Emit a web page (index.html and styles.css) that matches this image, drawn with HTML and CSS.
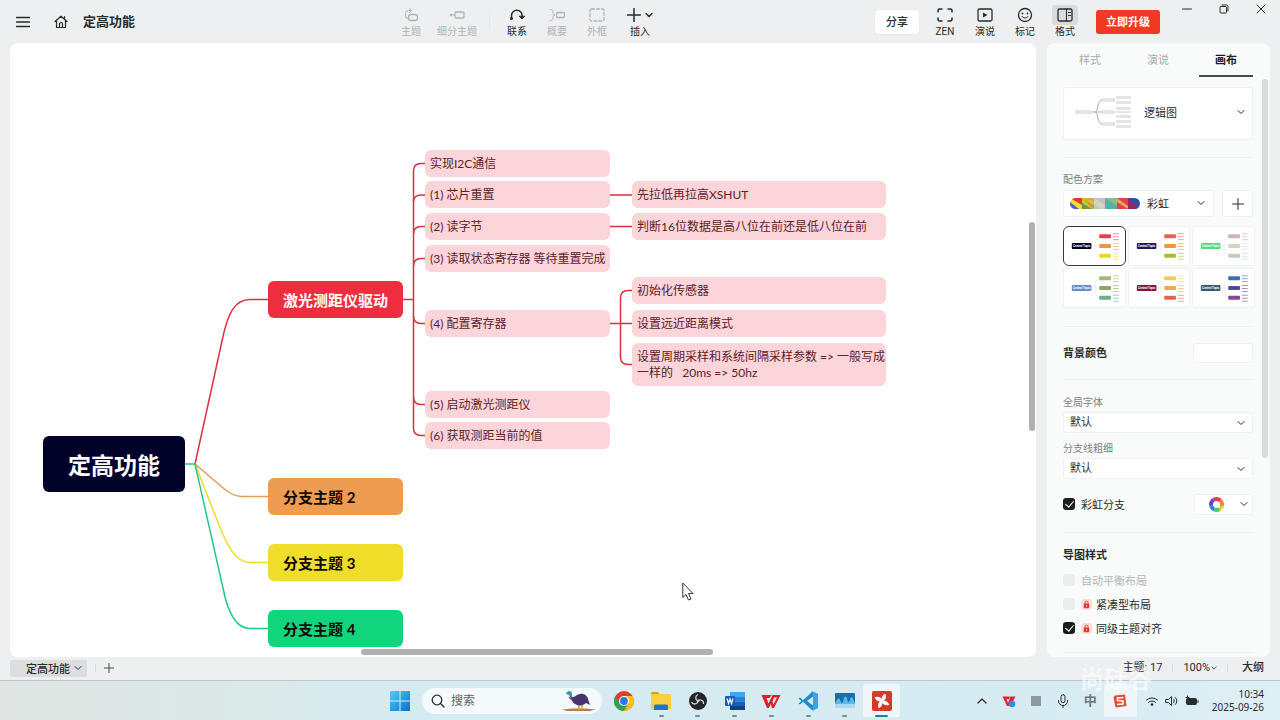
FILE: index.html
```html
<!DOCTYPE html>
<html lang="zh-CN">
<head>
    <meta charset="UTF-8">
    <meta name="viewport" content="width=device-width, initial-scale=1.0">
    <title>定高功能</title>
    <link rel="stylesheet" href="styles.css">
</head>
<body>

    <!-- shared shapes -->
    <svg class="defs" width="0" height="0">
        <symbol id="chevron" viewBox="0 0 8 8"><path d="M1 2.500 4 5.500 7 2.500"/></symbol>
        <symbol id="plus" viewBox="0 0 12 12"><path d="M6 0.500V11.500M0.500 6H11.500"/></symbol>
        <symbol id="lock" viewBox="0 0 12 12">
            <rect width="12" height="12" rx="3" fill="#fde0dd"/>
            <path d="M4.300 5.500V4a1.700 1.700 0 0 1 3.400 0V5.500" fill="none" stroke="#e5352b"/>
            <rect x="3" y="5" width="6" height="5" rx="1" fill="#e5352b"/>
            <path d="M6 6.500V8.500" stroke="#fff" stroke-width="0.800"/>
        </symbol>
        <symbol id="thumb" viewBox="0 0 62 38">
            <path d="M28 19H31M36 9.500C31 9.500 33 19 31 19H36M31 19C33 19 31 28.500 36 28.500" fill="none" stroke="#c9cdd4" stroke-width="0.500" stroke-dasharray="1 1"/>
            <rect class="c0" x="8" y="16" width="20" height="6" rx="1"/>
            <text x="18" y="20" text-anchor="middle">Central Topic</text>
            <rect class="c1" x="36" y="7" width="12" height="4" rx="1"/>
            <rect class="c2" x="36" y="17" width="12" height="4" rx="1"/>
            <rect class="c3" x="36" y="27" width="12" height="4" rx="1"/>
            <path class="l1" d="M50 6.500H56M50 9.500H56M50 12.500H56"/>
            <path class="l2" d="M50 16.500H56M50 19.500H56M50 22.500H56"/>
            <path class="l3" d="M50 26.500H56M50 29.500H56M50 32.500H56"/>
        </symbol>
    </svg>

    <header class="topbar">
        <div class="topbar-left">
            <button class="icon-btn" aria-label="菜单">
                <svg class="line" width="14" height="12" viewBox="0 0 14 12"><path d="M0.500 1.500H13.500M0.500 6H13.500M0.500 10.500H13.500" stroke-width="1.300"/></svg>
            </button>
            <button class="icon-btn" aria-label="主页">
                <svg class="line" width="14" height="14" viewBox="0 0 14 14"><path d="M1 6.500 7 1.200 13 6.500M2.500 5.500V12.500H11.500V5.500M5.500 12.500V9a1.500 1.500 0 0 1 3 0V12.500M10.500 1.500V4" stroke-width="1.200"/></svg>
            </button>
            <h1 class="doc-title">定高功能</h1>
        </div>

        <div class="tools">
            <button class="tool" disabled>
                <svg class="line" width="16" height="16" viewBox="0 0 16 16"><path d="M8 3.500H5.500a3 3 0 0 0-3 3V9a2.500 2.500 0 0 0 2.500 2.500M6.500 1.500 8.800 3.500 6.500 5.500"/><rect x="5.500" y="7.500" width="9" height="6" rx="2.500" stroke-width="1.300"/></svg>
                <span>主题</span>
            </button>
            <button class="tool wide" disabled>
                <svg class="line" width="16" height="16" viewBox="0 0 16 16"><rect x="6" y="5" width="9" height="6" rx="1" stroke-width="1.300"/><path d="M3.500 8H6"/><circle cx="2" cy="8" r="1.200" fill="currentColor" stroke="none"/></svg>
                <span>细分主题</span>
            </button>
            <span class="tool-sep"></span>
            <button class="tool">
                <svg class="line" width="16" height="16" viewBox="0 0 16 16"><path d="M2.500 11.500V8.500a5.300 5.300 0 0 1 10.600 0V11" stroke-width="1.500"/><path d="M10.500 9.500 13 12 15.500 9.500Z" fill="currentColor"/><circle cx="2.500" cy="11.500" r="1.500" fill="currentColor" stroke="none"/></svg>
                <span>联系</span>
            </button>
            <button class="tool" disabled>
                <svg class="line" width="16" height="16" viewBox="0 0 16 16"><path d="M1 2.500C4 2.500 4 3.500 4 5.500 4 7 4.500 8 6 8 4.500 8 4 9 4 10.500 4 12.500 4 13.500 1 13.500"/><rect x="7.500" y="5.500" width="8" height="5" rx="1" stroke-width="1.300"/></svg>
                <span>概要</span>
            </button>
            <button class="tool" disabled>
                <svg class="line" width="16" height="16" viewBox="0 0 16 16"><rect x="1" y="2" width="14" height="12" rx="1.500" stroke-width="1.300" stroke-dasharray="3 2"/></svg>
                <span>外框</span>
            </button>
            <button class="tool insert">
                <span class="insert-icons">
                    <svg class="line" width="14" height="14" viewBox="0 0 14 14"><path d="M7 0.500V13.500M0.500 7H13.500" stroke-width="1.500"/></svg>
                    <svg class="line bold" width="8" height="8"><use href="#chevron"/></svg>
                </span>
                <span>插入</span>
            </button>
        </div>

        <div class="topbar-right">
            <button class="share">分享</button>
            <div class="view-tools">
                <button class="tool">
                    <svg class="line" width="16" height="16" viewBox="0 0 16 16"><path d="M1 5V3.500A1.500 1.500 0 0 1 2.500 2H5M11 2H13.500A1.500 1.500 0 0 1 15 3.500V5M15 11V12.500A1.500 1.500 0 0 1 13.500 14H11M5 14H2.500A1.500 1.500 0 0 1 1 12.500V11" stroke-width="1.500"/></svg>
                    <span>ZEN</span>
                </button>
                <button class="tool">
                    <svg class="line" width="16" height="16" viewBox="0 0 16 16"><rect x="1" y="2" width="14" height="12" rx="1.500" stroke-width="1.300"/><path d="M6 5.500V10.500L10.500 8Z" fill="currentColor" stroke="none"/></svg>
                    <span>演说</span>
                </button>
                <button class="tool">
                    <svg class="line" width="16" height="16" viewBox="0 0 16 16"><circle cx="8" cy="8" r="6.500" stroke-width="1.300"/><path d="M5 9.500C6 11.500 10 11.500 11 9.500"/><circle cx="5.500" cy="6.500" r="0.900" fill="currentColor" stroke="none"/><circle cx="10.500" cy="6.500" r="0.900" fill="currentColor" stroke="none"/></svg>
                    <span>标记</span>
                </button>
                <button class="tool active">
                    <svg class="line" width="16" height="16" viewBox="0 0 16 16"><rect x="1" y="2" width="14" height="12" rx="1.500" stroke-width="1.300"/><path d="M9.500 2V14M11.500 5.500H13.500M11.500 8.500H13.500"/></svg>
                    <span>格式</span>
                </button>
            </div>
            <button class="upgrade">立即升级</button>
            <div class="window-controls">
                <button aria-label="最小化"><svg class="line" width="10" height="10" viewBox="0 0 10 10"><path d="M0.500 5H9.500"/></svg></button>
                <button aria-label="还原"><svg class="line" width="10" height="10" viewBox="0 0 10 10"><rect x="1" y="2.500" width="6.500" height="6.500" rx="1"/><path d="M3 1H7.500A1.500 1.500 0 0 1 9 2.500V7"/></svg></button>
                <button aria-label="关闭"><svg class="line" width="10" height="10" viewBox="0 0 10 10"><path d="M1 1 9 9M9 1 1 9"/></svg></button>
            </div>
        </div>
    </header>

    <main class="workspace">
        <section class="canvas">
            <svg class="links" width="1026" height="614" viewBox="10 43 1026 614">
                <path class="red" d="M195 464 222 341C228 312 235 299.500 250 299.500H268"/>
                <path class="orange" d="M195 464 222 487C230 494 235 496.500 242 496.500H268"/>
                <path class="yellow" d="M195 464 221 530C229 549 237 562.500 250 562.500H268"/>
                <path class="green" d="M185 464H195L223 588C228 614 236 628.500 250 628.500H268"/>

                <!-- level 2 -->
                <path class="red" d="M403 299.500H413.500M425 163.500H421Q413.500 163.500 413.500 171V428Q413.500 435.500 421 435.500H425"/>
                <path class="red" d="M425 195H421Q413.500 195 413.500 202M425 226.500H421Q413.500 226.500 413.500 234M425 258.500H421Q413.500 258.500 413.500 266M425 323.500H421Q413.500 323.500 413.500 316M425 404.500H421Q413.500 404.500 413.500 397"/>

                <!-- level 3 -->
                <path class="red" d="M610 195H632M610 226.500H632M610 323.500H632M632 290.500H628Q620.500 290.500 620.500 298V357Q620.500 364.500 628 364.500H632"/>
            </svg>

            <div class="node root">定高功能</div>
            <div class="node branch branch-1">激光测距仪驱动</div>
            <div class="node branch branch-2">分支主题 2</div>
            <div class="node branch branch-3">分支主题 3</div>
            <div class="node branch branch-4">分支主题 4</div>

            <div class="node sub sub-1">实现I2C通信</div>
            <div class="node sub sub-2">(1) 芯片重置</div>
            <div class="node sub sub-3">(2) 读字节</div>
            <div class="node sub sub-4">(3) 读取状态寄存器 等待重置完成</div>
            <div class="node sub sub-5">(4) 配置寄存器</div>
            <div class="node sub sub-6">(5) 启动激光测距仪</div>
            <div class="node sub sub-7">(6) 获取测距当前的值</div>

            <div class="node leaf leaf-1">先拉低再拉高XSHUT</div>
            <div class="node leaf leaf-2">判断16位数据是高八位在前还是低八位在前</div>
            <div class="node leaf leaf-3">初始化传感器</div>
            <div class="node leaf leaf-4">设置远近距离模式</div>
            <div class="node leaf leaf-5">设置周期采样和系统间隔采样参数 =&gt; 一般写成<br>一样的 &nbsp; 20ms =&gt; 50hz</div>

            <span class="scroll-y"></span>
            <span class="scroll-x"></span>
            <svg class="cursor" width="12" height="19" viewBox="0 0 12 19"><path d="M0.800 1V15.500L4 12.500 6.500 18 9 17 6.500 11.500H11Z" fill="#fff" stroke="#333"/></svg>
        </section>

        <aside class="panel">
            <nav class="tabs">
                <button class="tab">样式</button>
                <button class="tab">演说</button>
                <button class="tab selected">画布</button>
            </nav>

            <div class="panel-body">
                <button class="structure">
                    <svg width="58" height="34" viewBox="0 0 58 34">
                        <path d="M14 17H28M20 17C24 17 21 5 28 5H40M20 17C24 17 21 29 28 29H40M28 17H40" fill="none" stroke="#aaa"/>
                        <g fill="#e4e4e4"><rect y="15" width="18" height="4" rx="2"/><rect x="27" y="3" width="12" height="4"/><rect x="27" y="15" width="12" height="4"/><rect x="27" y="27" width="12" height="4"/>
                        <rect x="41" y="1" width="15" height="3"/><rect x="41" y="6" width="15" height="3"/><rect x="41" y="12" width="15" height="3"/><rect x="41" y="16" width="15" height="2"/><rect x="41" y="20" width="15" height="3"/><rect x="41" y="25" width="15" height="3"/><rect x="41" y="30" width="15" height="3"/></g>
                    </svg>
                    <span>逻辑图</span>
                    <svg class="line" width="8" height="8"><use href="#chevron"/></svg>
                </button>

                <section class="group colors">
                    <h3 class="label">配色方案</h3>
                    <div class="scheme-row">
                        <button class="scheme">
                            <svg width="70" height="11" viewBox="0 0 70 11">
                                <clipPath id="pill"><rect width="70" height="11" rx="5.500"/></clipPath>
                                <g clip-path="url(#pill)">
                                    <rect width="12" height="11" fill="#f5df25"/><path d="M0 0H12V7Z" fill="#e8333d"/><path d="M0 4 9 11H0Z" fill="#4661d8"/>
                                    <rect x="12" width="12" height="11" fill="#b9cf2d"/><path d="M12 0H24V3Z" fill="#ee9b4b"/><path d="M12 5 22 11H12Z" fill="#7d8d4b"/><path d="M12 0 24 8V11Z" fill="#ef7d35"/>
                                    <rect x="24" width="11" height="11" fill="#d3d5c2"/><path d="M24 0H35V7Z" fill="#c9bfcb"/><path d="M24 6 32 11H24Z" fill="#a9d6ae"/>
                                    <rect x="35" width="12" height="11" fill="#53b3a0"/><path d="M35 0H47V8Z" fill="#8ab983"/>
                                    <rect x="47" width="11" height="11" fill="#e0414a"/><path d="M47 0 58 8V11L47 4Z" fill="#f5a05b"/>
                                    <rect x="58" width="12" height="11" fill="#2f4f9e"/><path d="M58 0 70 11H58Z" fill="#8d2a68"/>
                                </g>
                            </svg>
                            <span>彩虹</span>
                            <svg class="line" width="8" height="8"><use href="#chevron"/></svg>
                        </button>
                        <button class="scheme-add" aria-label="添加配色"><svg class="line" width="12" height="12"><use href="#plus"/></svg></button>
                    </div>
                    <div class="thumbs">
                        <button class="thumb theme-1 selected" aria-label="配色 1"><svg><use href="#thumb"/></svg></button>
                        <button class="thumb theme-2" aria-label="配色 2"><svg><use href="#thumb"/></svg></button>
                        <button class="thumb theme-3" aria-label="配色 3"><svg><use href="#thumb"/></svg></button>
                        <button class="thumb theme-4" aria-label="配色 4"><svg><use href="#thumb"/></svg></button>
                        <button class="thumb theme-5" aria-label="配色 5"><svg><use href="#thumb"/></svg></button>
                        <button class="thumb theme-6" aria-label="配色 6"><svg><use href="#thumb"/></svg></button>
                    </div>
                </section>

                <section class="group background">
                    <h3>背景颜色</h3>
                    <button class="swatch" aria-label="背景颜色"></button>
                </section>

                <section class="group">
                    <label class="label" for="font">全局字体</label>
                    <div class="select-box">
                        <select id="font"><option>默认</option></select>
                        <svg class="line" width="8" height="8"><use href="#chevron"/></svg>
                    </div>
                    <label class="label" for="weight">分支线粗细</label>
                    <div class="select-box">
                        <select id="weight"><option>默认</option></select>
                        <svg class="line" width="8" height="8"><use href="#chevron"/></svg>
                    </div>
                    <div class="rainbow-row">
                        <label class="check"><input type="checkbox" checked><span>彩虹分支</span></label>
                        <button class="wheel" aria-label="彩虹颜色">
                            <span class="wheel-icon"></span>
                            <svg class="line" width="8" height="8"><use href="#chevron"/></svg>
                        </button>
                    </div>
                </section>

                <section class="group map-style">
                    <h3>导图样式</h3>
                    <label class="check off"><input type="checkbox" disabled><span>自动平衡布局</span></label>
                    <label class="check"><input type="checkbox"><svg width="11" height="11"><use href="#lock"/></svg><span>紧凑型布局</span></label>
                    <label class="check"><input type="checkbox" checked><svg width="11" height="11"><use href="#lock"/></svg><span>同级主题对齐</span></label>
                </section>
            </div>
            <span class="panel-scroll"></span>
        </aside>
    </main>

    <footer class="statusbar">
        <button class="sheet">定高功能 <svg class="line" width="8" height="8"><use href="#chevron"/></svg></button>
        <span class="bar"></span>
        <button class="sheet-add" aria-label="添加画布"><svg class="line" width="10" height="10"><use href="#plus"/></svg></button>
        <div class="status-right">
            <span>主题: 17</span>
            <span class="bar"></span>
            <button class="zoom">100%<svg class="line" width="6" height="6"><use href="#chevron"/></svg></button>
            <span class="bar"></span>
            <button class="outline">大纲</button>
        </div>
    </footer>

    <div class="taskbar">
        <div class="task-center">
            <button class="start" aria-label="开始">
                <svg width="20" height="20" viewBox="0 0 20 20">
                    <linearGradient id="win" x1="0" y1="0" x2="1" y2="1"><stop offset="0" stop-color="#54cdf4"/><stop offset="1" stop-color="#0670cc"/></linearGradient>
                    <path d="M0.500 0H9.500V9.500H0V0.500ZM10.500 0H20V9.500H10.500ZM0 10.500H9.500V20H0ZM10.500 10.500H20V20H10.500Z" fill="url(#win)"/>
                </svg>
            </button>
            <label class="search">
                <svg class="line" width="14" height="14" viewBox="0 0 14 14"><circle cx="6" cy="6" r="4.800" stroke-width="1.300"/><path d="M9.500 9.500 13 13" stroke-width="1.300"/></svg>
                <input type="text" placeholder="搜索" aria-label="搜索">
                <svg width="34" height="22" viewBox="0 0 34 22">
                    <path d="M0 19.500C8 18 24 18 34 19.500L28 21H5Z" fill="#b77b4e"/>
                    <path d="M17 14V19.500M20 14V19.500" stroke="#e2a93a" stroke-width="1.800"/>
                    <path d="M9 5C11 9 13 6 16 4.500 21 2.500 25 5 26 9L28 15 24 13C20 17 13 16 10 11L7 4Z" fill="#4a3470"/>
                    <path d="M5 2C7 0 10 1 10 4L10 8 7 5 4 4Z" fill="#2e9fa8"/>
                    <path d="M7 7 10 10" stroke="#c23c54" stroke-width="1.500"/>
                </svg>
            </label>
            <div class="apps">
                <button class="app" aria-label="Chrome">
                    <svg width="20" height="20" viewBox="0 0 20 20"><circle cx="10" cy="10" r="10" fill="#e33b2e"/><path d="M1.340 5A10 10 0 0 0 10 20L14.300 12.500H5.700Z" fill="#2da34f"/><path d="M10 20A10 10 0 0 0 18.660 5H10L14.330 12.500Z" fill="#fbc116"/><circle cx="10" cy="10" r="5" fill="#fff"/><circle cx="10" cy="10" r="3.900" fill="#2c79e6"/></svg>
                </button>
                <button class="app open" aria-label="文件资源管理器">
                    <svg width="20" height="20" viewBox="0 0 20 20"><path d="M0 2.500Q0 1 1.500 1H7L9 3.500H0Z" fill="#d99d15"/><path d="M0 5V3H18.500Q20 3 20 4.500V18.500H0Z" fill="#fbcf3f"/><path d="M3 19V15Q3 13.500 4.500 13.500H15.500Q17 13.500 17 15V19Z" fill="#1777c8"/></svg>
                </button>
                <button class="app open" aria-label="OBS">
                    <svg width="20" height="20" viewBox="0 0 20 20"><circle cx="10" cy="10" r="9" fill="#22242a"/><g fill="none" stroke="#d5d5d8" stroke-width="1.300"><path d="M10 10C7 9 7 4.500 10 3.500M10 10C12 7.500 16 9.500 15.500 13M10 10C9.500 13.500 5 14 3.500 11"/></g><circle cx="10" cy="10" r="1.300" fill="#d5d5d8"/></svg>
                </button>
                <button class="app open" aria-label="Word">
                    <svg width="20" height="20" viewBox="0 0 20 20"><rect x="5" y="1" width="15" height="5" fill="#41a5ee"/><rect x="5" y="6" width="15" height="4.500" fill="#2b7cd3"/><rect x="5" y="10.500" width="15" height="4.500" fill="#185abd"/><rect x="5" y="15" width="15" height="4" fill="#103f91"/><rect y="5" width="10" height="10" rx="1" fill="#1b5abe"/><path d="M2 7.500 3.500 12.500 5 8 6.500 12.500 8 7.500" fill="none" stroke="#fff" stroke-width="1.200"/></svg>
                </button>
                <button class="app open" aria-label="WPS">
                    <svg width="20" height="20" viewBox="0 0 20 20"><path d="M0.500 4H10.500L8.500 7H5.500L7.500 12.500 11.500 4H19.500L13 17H11L9.800 13 8 17H6Z" fill="#df1f2c"/><path d="M13 6.500H16L12.500 13.500 11.500 10.500Z" fill="#fff" opacity=".85"/></svg>
                </button>
                <button class="app open" aria-label="VS Code">
                    <svg width="20" height="20" viewBox="0 0 20 20"><path d="M14.500 0.500 20 3V17L14.500 19.500 5 10.800 2 13.500 0.500 12.500 3.500 10 0.500 7.500 2 6.500 5 9.200ZM15 5.500 9 10 15 14.500Z" fill="#1f8ad2" fill-rule="evenodd"/><path d="M14.500 0.500 20 3V17L14.500 19.500 15 14.500V5.500Z" fill="#35a5ec"/></svg>
                </button>
                <button class="app open" aria-label="监视器">
                    <svg width="20" height="20" viewBox="0 0 20 20"><rect y="2" width="20" height="15" rx="1" fill="#176fb0"/><path d="M0 12 3 7.500C5 6 5.500 12 7 12 8.500 12 8.500 5.500 10.500 5.500 12.500 5.500 12 11 13.500 11 15 11 15 6 17 6L20 12V17H0Z" fill="#5bb9ec"/><path d="M0 13H20V17H0Z" fill="#a8dcf5"/></svg>
                </button>
                <button class="app open current" aria-label="Xmind">
                    <svg width="20" height="20" viewBox="0 0 20 20"><rect width="20" height="20" rx="2" fill="#d63a25"/><path d="M10 10C5 10 4 8 3.500 6.500 7 6 9 7 10 10 10 5 12 4 13 3.500 14 7 13 9 10 10 15 10 16 12 16.500 13.500 13 14 11 13 10 10 10 15 8 16 7 16.500 6 13 7 11 10 10Z" fill="#fff" stroke="#fff" stroke-width="1.200"/></svg>
                </button>
            </div>
        </div>

        <div class="tray">
            <button aria-label="显示隐藏的图标"><svg class="line" width="10" height="10" viewBox="0 0 10 10"><path d="M1 7 5 3 9 7" stroke-width="1.300"/></svg></button>
            <button aria-label="WPS 云"><svg width="14" height="14" viewBox="0 0 14 14"><path d="M0.500 2.500H8L7 5H4.500L6 9 8.500 2.500H13.500L11 7 6.500 12H5Z" fill="#dd2631"/><circle cx="10" cy="10" r="3.300" fill="#2d8ce8"/></svg></button>
            <button aria-label="后台应用"><svg width="10" height="10"><rect width="10" height="10" fill="#8e9a9f"/></svg></button>
            <button aria-label="麦克风"><svg class="line" width="12" height="14" viewBox="0 0 12 14"><rect x="4" y="0.700" width="4" height="8" rx="2"/><path d="M1.500 6.500V7A4.500 4.500 0 0 0 10.500 7V6.500M6 11.500V13.500"/></svg></button>
            <button class="ime">中</button>
            <button class="sogou" aria-label="搜狗输入法"><svg width="14" height="14" viewBox="0 0 14 14"><path d="M2 1.500 12 0.500 13.500 12 2.500 13.500 0.500 3Z" fill="#e24b34"/><path d="M10.500 3.500 4.500 4 4.500 6.500 10 7 10 10 4 10.500" fill="none" stroke="#fff" stroke-width="1.500"/></svg></button>
            <div class="system">
                <svg class="line" width="14" height="12" viewBox="0 0 14 12"><path d="M1.500 5A8 8 0 0 1 12.500 5M3.500 7.300A5 5 0 0 1 10.500 7.300"/><circle cx="7" cy="9.500" r="1.300" fill="currentColor" stroke="none"/></svg>
                <svg class="line" width="14" height="12" viewBox="0 0 14 12"><path d="M1 4.500H3.500L6.500 1.500V10.500L3.500 7.500H1ZM8.500 4C9.500 5 9.500 7 8.500 8M10.300 2.500C12.300 4.500 12.300 7.500 10.300 9.500"/></svg>
                <svg class="line" width="14" height="12" viewBox="0 0 14 12"><rect x="1.500" y="3.500" width="10" height="6" rx="1" fill="currentColor"/><path d="M13 5.500V7.500M2.500 1V5M1 2.500H4"/></svg>
            </div>
            <div class="clock"><span>10:34</span><span>2025-09-26</span></div>
        </div>
        <span class="watermark">尚硅谷</span>
    </div>

</body>
</html>
```
FILE: styles.css
```css
* {
    margin: 0;
    padding: 0;
    box-sizing: border-box;
}

body {
    display: flex;
    flex-direction: column;
    height: 100vh;
    overflow: hidden;
    background: #eeeff1;
    color: #2a2b2d;
    font-family: Roboto, "Noto Sans CJK SC", sans-serif;
    font-size: 11px;
}

button,
input,
select {
    font: inherit;
    color: inherit;
    border: none;
    background: none;
}

h1,
h3 {
    font-size: 11px;
    font-weight: 700;
}

svg {
    display: block;
    flex: none;
}

.defs {
    display: none;
}

.line {
    fill: none;
    stroke: currentColor;
    stroke-linecap: round;
    stroke-linejoin: round;
}

.line.bold {
    stroke-width: 1.5;
}

/* top bar */
.topbar {
    display: flex;
    flex: none;
    height: 43px;
}

.topbar-left {
    display: flex;
    align-items: center;
    gap: 24px;
    padding: 0 44px 0 16px;
}

.doc-title {
    font-size: 13px;
    line-height: 20px;
    margin-left: -9px;
}

.tools {
    display: flex;
    margin-left: auto;
}

.tool {
    width: 40px;
    padding-top: 7px;
    display: flex;
    flex-direction: column;
    align-items: center;
    gap: 2px;
    font-size: 10px;
    line-height: 14px;
    white-space: nowrap;
}

.tool:disabled {
    color: #b2b3b6;
}

.tool.wide {
    width: 52px;
}

.tool.insert {
    width: 46px;
}

.tool-sep {
    width: 1px;
    height: 16px;
    margin: 14px 7px 0 6px;
    background: #e5e6e8;
}

.insert-icons {
    display: flex;
    align-items: center;
    gap: 4px;
    height: 16px;
}

.topbar-right {
    display: flex;
    align-items: flex-start;
    margin-left: auto;
}

.share,
.upgrade {
    height: 24px;
    margin-top: 10px;
    padding-bottom: 2px;
    border-radius: 3px;
    font-weight: 700;
}

.share {
    width: 44px;
    background: #fff;
    box-shadow: 0 0 1px #ccc;
    font-weight: 500;
}

.upgrade {
    width: 64px;
    margin-left: 11px;
    background: #f03a22;
    color: #fff;
}

.view-tools {
    display: flex;
    margin-left: 6px;
}

.tool.active svg {
    box-sizing: content-box;
    padding: 2px 5px;
    margin: -2px 0;
    border-radius: 3px;
    background: #d9dadc;
}

.window-controls {
    display: flex;
    margin-left: 9px;
}

.window-controls button {
    width: 37px;
    height: 18px;
    display: flex;
    align-items: center;
    justify-content: center;
}

/* map */
.workspace {
    flex: 1;
    min-height: 0;
    display: flex;
    gap: 11px;
    padding: 0 10px;
}

.canvas {
    position: relative;
    flex: 1;
    overflow: hidden;
    border-radius: 8px;
    background: #fff;
    font-family: Lato, "Noto Sans CJK SC", sans-serif;
}

.links {
    position: absolute;
    left: 0;
    top: 0;
    fill: none;
    stroke-width: 1.5;
}

.red { stroke: #dc3144; }
.orange { stroke: #e79a50; }
.yellow { stroke: #ecdb2a; }
.green { stroke: #22c988; }

.node {
    position: absolute;
    display: flex;
    align-items: center;
    border-radius: 6px;
    white-space: nowrap;
}

.root {
    left: 33px;
    top: 393px;
    width: 142px;
    height: 56px;
    justify-content: center;
    background: #000229;
    color: #fff;
    font-size: 23px;
    font-weight: 700;
}

.branch {
    left: 258px;
    width: 135px;
    height: 37px;
    padding-left: 15px;
    color: #0d0b02;
    font-size: 15px;
    font-weight: 700;
}

.branch-1 { top: 238px; background: #ee2d3e; color: #fff; }
.branch-2 { top: 435px; background: #ee9c51; }
.branch-3 { top: 501px; background: #efdd2a; }
.branch-4 { top: 567px; background: #11d57d; }

.sub,
.leaf {
    height: 27px;
    padding-left: 5px;
    background: #fbd5d9;
    color: #60202b;
    font-size: 12px;
    line-height: 16px;
}

.sub {
    left: 415px;
    width: 185px;
}

.sub-1 { top: 107px; }
.sub-2 { top: 138px; }
.sub-3 { top: 170px; }
.sub-4 { top: 202px; }
.sub-5 { top: 267px; }
.sub-6 { top: 348px; }
.sub-7 { top: 379px; }

.leaf {
    left: 622px;
    width: 254px;
}

.leaf-1 { top: 138px; }
.leaf-2 { top: 170px; }
.leaf-3 { top: 234px; }
.leaf-4 { top: 267px; }
.leaf-5 { top: 300px; height: 43px; display: block; padding-top: 6px; }

.scroll-y,
.scroll-x,
.panel-scroll {
    position: absolute;
    border-radius: 3px;
    background: #b0b0b0;
}

.scroll-y {
    right: 1px;
    top: 179px;
    width: 6px;
    height: 209px;
}

.scroll-x {
    left: 351px;
    bottom: 2px;
    width: 352px;
    height: 6px;
}

.cursor {
    position: absolute;
    left: 672px;
    top: 539px;
}

/* side panel */
.panel {
    position: relative;
    width: 223px;
    padding: 0 17px 0 16px;
    overflow: hidden;
    border-radius: 8px;
    background: #f9fbfb;
}

.panel-scroll {
    right: 2px;
    top: 36px;
    width: 6px;
    height: 379px;
    background: #dadbdb;
}

.tabs {
    display: grid;
    grid-template-columns: repeat(3, 1fr);
    gap: 14px;
    height: 34px;
}

.tab {
    color: #a8a9ab;
    border-bottom: 2px solid transparent;
}

.tab.selected {
    color: #1b1c1e;
    font-weight: 700;
    border-color: #4a4b4d;
}

.structure,
.scheme,
.scheme-add,
.swatch,
.wheel,
.select-box,
.thumb {
    background: #fff;
    border: 1px solid #f0f1f2;
    border-radius: 3px;
}

.structure {
    width: 100%;
    height: 53px;
    margin-top: 10px;
    padding: 0 7px 4px 11px;
    display: flex;
    align-items: center;
    gap: 11px;
}

.structure .line,
.scheme .line {
    margin-left: auto;
}

.group {
    border-top: 1px solid #eeefef;
}

.label {
    display: block;
    color: #7e7f81;
    font-size: 10px;
    font-weight: 400;
    line-height: 14px;
}

.colors {
    height: 169px;
    margin-top: 17px;
    padding-top: 15px;
}

.scheme-row {
    display: flex;
    gap: 8px;
    height: 27px;
    margin-top: 3px;
}

.scheme {
    flex: 1;
    display: flex;
    align-items: center;
    gap: 7px;
    padding: 0 8px 1px 6px;
}

.scheme-add {
    width: 31px;
    display: flex;
    align-items: center;
    justify-content: center;
}

.thumbs {
    display: grid;
    grid-template-columns: repeat(3, 1fr);
    gap: 2px;
    margin: 9px -2px 0 0;
}

.thumb {
    height: 40px;
    overflow: hidden;
}

.thumb svg {
    width: 100%;
    height: 100%;
}

.thumb.selected {
    border-color: #3a3b3d;
    border-radius: 6px;
}

#thumb text {
    fill: #fff;
    font-size: 3px;
    font-weight: 700;
}

.c0 { fill: var(--c0); }
.c1 { fill: var(--c1); }
.c2 { fill: var(--c2); }
.c3 { fill: var(--c3); }

.l1 { stroke: var(--c1); }
.l2 { stroke: var(--c2); }
.l3 { stroke: var(--c3); }

.l1,
.l2,
.l3 {
    opacity: .6;
}

.theme-1 { --c0: #020229; --c1: #ec3d50; --c2: #ee9548; --c3: #e6dc25; }
.theme-2 { --c0: #201a5c; --c1: #e0694b; --c2: #eb9d35; --c3: #a5bf2a; }
.theme-3 { --c0: #4fdc7f; --c1: #cfb1bd; --c2: #d3d6bf; --c3: #bdd0bd; }
.theme-4 { --c0: #6689d3; --c1: #aab876; --c2: #8ca866; --c3: #72ae8c; }
.theme-5 { --c0: #86123b; --c1: #ebcf55; --c2: #f0a55c; --c3: #e2654c; }
.theme-6 { --c0: #355b70; --c1: #3871ad; --c2: #51479c; --c3: #87459a; }

.background {
    height: 53px;
    display: flex;
    align-items: center;
    justify-content: space-between;
}

.background h3 {
    padding-bottom: 2px;
}

.swatch {
    width: 60px;
    height: 20px;
}

.background + .group {
    height: 153px;
    padding-top: 16px;
}

.select-box {
    position: relative;
    height: 21px;
    margin: 2px 0 9px;
}

.select-box select {
    width: 100%;
    height: 100%;
    padding-left: 6px;
    appearance: none;
}

.select-box .line {
    position: absolute;
    right: 7px;
    top: 6px;
    pointer-events: none;
}

.rainbow-row {
    display: flex;
    align-items: center;
    justify-content: space-between;
    margin-top: 13px;
}

.wheel {
    width: 59px;
    height: 21px;
    padding: 0 4px 0 14px;
    display: flex;
    align-items: center;
    justify-content: space-between;
}

.wheel-icon {
    width: 15px;
    height: 15px;
    border-radius: 50%;
    background: radial-gradient(circle, #fff 3px, transparent 4px),
        conic-gradient(#e8394a 0 12%, #f08a3c 12% 30%, #f3d433 30% 42%, #4cc66c 42% 58%, #3a7df0 58% 75%, #5a46d6 75% 88%, #c83a9c 88%);
}

.check {
    display: flex;
    align-items: center;
    gap: 6px;
    height: 24px;
}

.check svg {
    margin-right: -2px;
}

.check input {
    width: 12px;
    height: 12px;
    border-radius: 3px;
    background: #ecedee;
    appearance: none;
}

.check input:checked {
    background: #1d1e20;
}

.check input:checked::after {
    content: "";
    display: block;
    width: 4px;
    height: 7px;
    margin: 1px 4px;
    border: solid #fff;
    border-width: 0 1px 1px 0;
    transform: rotate(40deg);
}

.check.off {
    color: #b3b4b6;
}

.map-style {
    padding-top: 15px;
}

.map-style h3 {
    line-height: 16px;
    margin-bottom: 4px;
}

.map-style::after {
    content: "";
    display: block;
    margin-top: 12px;
    border-top: 1px solid #eeefef;
}

/* sheet tabs and status */
.statusbar {
    flex: none;
    display: flex;
    align-items: center;
    height: 23px;
    padding: 0 16px 1px 10px;
}

.sheet {
    display: flex;
    align-items: center;
    gap: 4px;
    height: 17px;
    padding: 0 5px 1px 16px;
    background: #dcdde0;
    border-radius: 2px;
    font-weight: 500;
}

.bar {
    width: 1px;
    height: 8px;
    margin: 0 8px;
    background: #d8d9db;
}

.status-right {
    display: flex;
    align-items: center;
    margin-left: auto;
    line-height: 14px;
}

.zoom {
    display: flex;
    align-items: center;
    gap: 1px;
}

.outline {
    margin-left: 4px;
    font-weight: 500;
}

.status-right .bar {
    margin: 0 10px;
}

/* system task bar */
.taskbar {
    position: relative;
    flex: none;
    display: grid;
    grid-template-columns: 1fr auto 1fr;
    height: 40px;
    border-top: 1px solid #b9c7ca;
    background: linear-gradient(90deg, #e0e5e2, #dbe9e9 20%, #d6ebf1 30%, #d6ebf2 80%, #dfeff6);
}

.task-center {
    grid-column: 2;
    display: flex;
    align-items: center;
    padding-left: 10px;
}

.search {
    display: flex;
    align-items: center;
    width: 180px;
    height: 26px;
    margin: 0 4px 0 12px;
    padding: 0 6px 0 9px;
    gap: 6px;
    border-radius: 13px;
    background: #f4f9fc;
}

.search input {
    flex: 1;
    width: 0;
    font-size: 12px;
}

.search input::placeholder {
    color: #606468;
}

.apps {
    display: flex;
    width: 294px;
    height: 33px;
}

.app {
    position: relative;
    flex: 1;
    display: flex;
    align-items: center;
    justify-content: center;
}

.app.open::after {
    content: "";
    position: absolute;
    bottom: 0;
    width: 5px;
    height: 2px;
    border-radius: 1px;
    background: #7b8a90;
}

.app.current {
    border-radius: 3px;
    background: #eff7fa;
}

.app.current::after {
    width: 13px;
    background: #21808d;
}

.tray {
    display: flex;
    align-items: center;
    justify-content: flex-end;
    padding-right: 16px;
}

.tray button {
    width: 27px;
    height: 33px;
    display: flex;
    align-items: center;
    justify-content: center;
}

.tray .ime {
    padding-bottom: 3px;
    color: #6d767a;
    font-size: 13px;
    font-weight: 700;
}

.tray .sogou {
    width: 33px;
    background: #eef6fa;
}

.system {
    display: flex;
    gap: 6px;
    margin: 0 13px 0 8px;
}

.clock {
    display: flex;
    flex-direction: column;
    align-items: flex-end;
    font-family: "Noto Sans", sans-serif;
    font-size: 10px;
    line-height: 13px;
}

.watermark {
    position: absolute;
    right: 128px;
    top: -13px;
    color: rgba(255, 255, 255, .6);
    font-size: 24px;
    line-height: 24px;
    font-weight: 700;
    pointer-events: none;
}
```
